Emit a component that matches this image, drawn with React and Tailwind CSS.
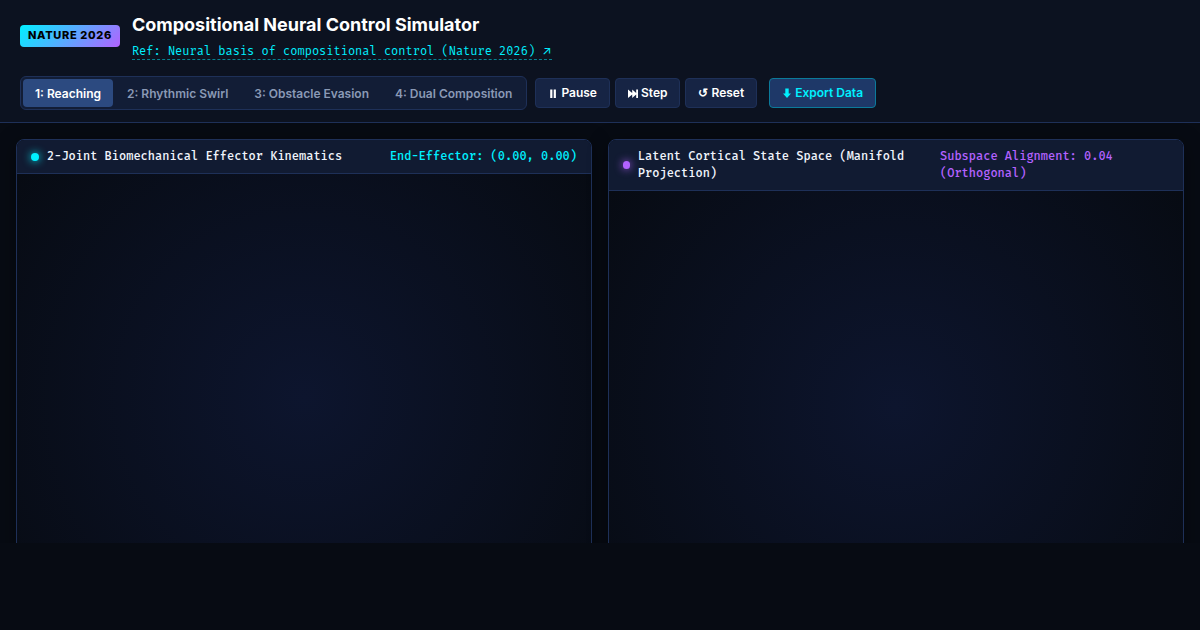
const tabs = ['1: Reaching', '2: Rhythmic Swirl', '3: Obstacle Evasion', '4: Dual Composition'];

const icons = {
  pause: <path d="M2.2 1.500h2.200v8.500H2.200zM5.700 1.500h2.200v8.500H5.700z" />,
  step: <path d="M0 1.500 4.200 5V1.500L8.200 5V1.500H10v8.500H8.200V6.500L4.200 10V6.500L0 10z" />,
  download: <path d="M3.3 0.5h3.4v5h2.3L5 10 1 5.500h2.300z" />,
};

function Label({ icon, children }) {
  return (
    <span className="flex items-center gap-[3px]">
      {icon === 'reset' ? (
        <span className="w-2.5 font-['Noto_Sans',sans-serif]" aria-hidden="true">
          ↺
        </span>
      ) : (
        <svg viewBox="0 0 10 10" className="size-2.5" fill="currentColor" aria-hidden="true">
          {icons[icon]}
        </svg>
      )}
      {children}
    </span>
  );
}

function Panel({ title, value, dot, tone }) {
  return (
    <section className="flex min-h-[484px] flex-col overflow-hidden rounded-lg border border-[#1e3058] shadow-[0_4px_20px_rgba(0,0,0,0.4)]">
      <div className="flex items-center justify-between border-b border-[#1e3058] bg-[#111b32] px-3.5 py-2 font-['Fira_Mono','DejaVu_Sans_Mono',monospace] text-xs leading-[17px] font-medium">
        <h2 className="flex items-center gap-2 text-[#f0f4fc]">
          <span className={`size-2 rounded-full ${dot}`} />
          <span>{title}</span>
        </h2>
        <span className={tone}>{value}</span>
      </div>
      <div className="flex-1 bg-[radial-gradient(circle_at_center,#0d152e_0%,#070b13_100%)]" />
    </section>
  );
}

export default function App() {
  return (
    <div className="flex h-screen flex-col overflow-hidden bg-[#070b13] font-['Inter',sans-serif] text-white">
      <header className="flex flex-col gap-4 border-b border-[#1e3058] bg-[#0c1220] px-5 py-3">
        <div className="flex items-center gap-3">
          <span className="rounded bg-[linear-gradient(135deg,#00f0ff,#b362ff)] px-2 pt-0.5 pb-1 text-[11px] leading-4 font-extrabold tracking-[0.06em] text-black">
            NATURE 2026
          </span>
          <div className="flex flex-col items-start">
            <h1 className="text-lg leading-[26px] font-bold">Compositional Neural Control Simulator</h1>
            <a
              href="#reference"
              className="mt-[5px] border-b border-dashed border-[#00f0ff]/50 font-['Fira_Mono','DejaVu_Sans_Mono',monospace] text-xs leading-4 text-[#00f0ff]"
            >
              Ref: Neural basis of compositional control (Nature 2026){' '}
              <span className="font-['Inter',sans-serif]">↗</span>
            </a>
          </div>
        </div>
        <div className="flex items-center">
          <nav className="mr-2 flex gap-0.5 rounded-md border border-[#1e3058] bg-[#121d36] p-0.5">
            {tabs.map((tab, i) => (
              <button
                key={tab}
                type="button"
                className={`rounded px-3 pt-[7px] pb-[5px] text-xs leading-4 font-semibold ${i === 0 ? 'bg-[#2c4a80] text-white' : 'text-[#8a99b5]'}`}
              >
                {tab}
              </button>
            ))}
          </nav>
          <div className="flex gap-[5px]">
            {['Pause', 'Step', 'Reset'].map((label) => (
              <button
                key={label}
                type="button"
                className="h-[30px] rounded border border-[#1e3058] bg-[#162444] px-3 text-xs leading-4 font-semibold"
              >
                <Label icon={label.toLowerCase()}>{label}</Label>
              </button>
            ))}
          </div>
          <button
            type="button"
            className="ml-3 h-[30px] rounded border border-[#0b7a9a] bg-[#1e3868] px-3 text-xs leading-4 font-semibold text-[#00f0ff]"
          >
            <Label icon="download">Export Data</Label>
          </button>
        </div>
      </header>
      <main className="grid min-h-0 flex-1 grid-cols-2 gap-4 overflow-hidden p-4">
        <Panel
          title="2-Joint Biomechanical Effector Kinematics"
          value="End-Effector: (0.00, 0.00)"
          dot="bg-[#00f0ff] shadow-[0_0_8px_#00f0ff]"
          tone="text-[#00f0ff]"
        />
        <Panel
          title="Latent Cortical State Space (Manifold Projection)"
          value="Subspace Alignment: 0.04 (Orthogonal)"
          dot="bg-[#b362ff] shadow-[0_0_8px_#b362ff]"
          tone="text-[#b362ff]"
        />
      </main>
      <footer className="h-[87px] shrink-0 bg-[#070b13]" />
    </div>
  );
}
